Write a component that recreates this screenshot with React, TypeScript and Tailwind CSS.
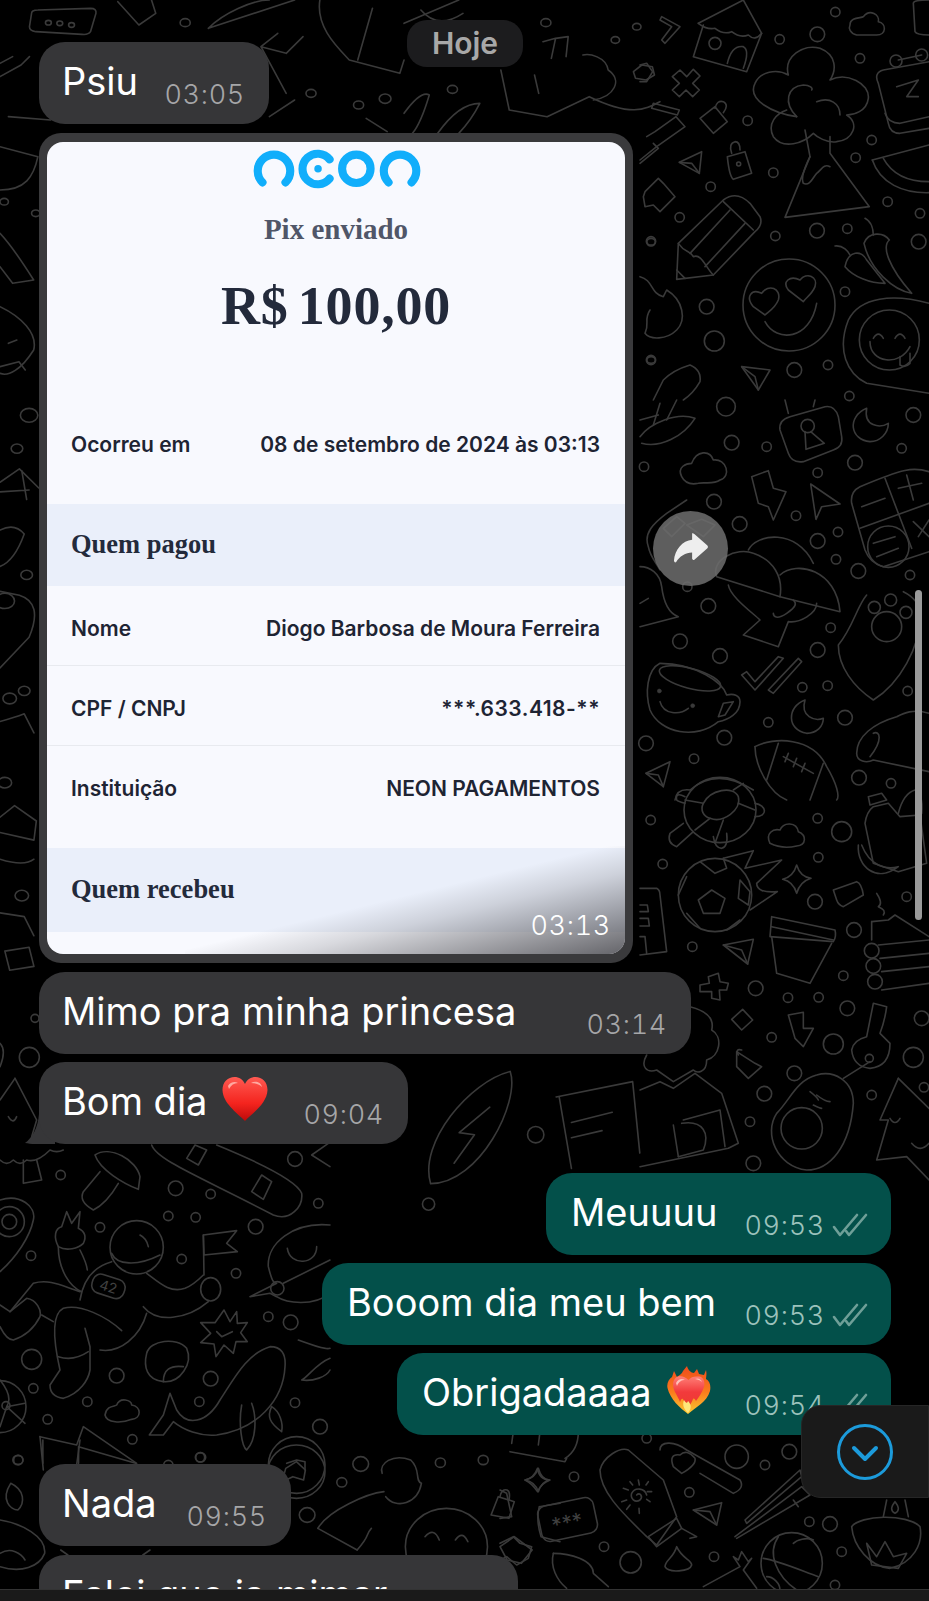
import type { ReactNode } from 'react';

type Dot = [number, number, number];

// doodles are written in the coordinates of a crop, then mapped back onto the page
function Region({ x, y, sx = 3, sy = 3, paths, dots = [], children }: { x: number; y: number; sx?: number; sy?: number; paths: string[]; dots?: Dot[]; children?: ReactNode }) {
  return (
    <g transform={`translate(${x} ${y}) scale(${1 / sx} ${1 / sy})`}>
      {paths.map((d, i) => <path key={i} d={d} vectorEffect="non-scaling-stroke" />)}
      {dots.map(([cx, cy, r], i) => <circle key={i} cx={cx} cy={cy} r={r} vectorEffect="non-scaling-stroke" />)}
      {children}
    </g>
  );
}

function Doodles() {
  return (
    <svg className="absolute inset-0" width="929" height="1601" viewBox="0 0 929 1601" fill="none" stroke="#3a3a3a" strokeWidth="1.6" strokeLinecap="round" strokeLinejoin="round">
      <Region x={640} y={0} paths={[
        'M175 70 L310 0 L365 100 L320 215 L160 170 L190 75', 'M175 70 Q200 90 225 85 Q250 105 275 95 Q300 115 325 105 Q345 125 365 100', 'M262 190 Q275 135 310 140 Q330 150 310 205',
        'M470 350 C400 340 320 300 345 250 C360 215 410 205 445 225 C430 170 490 130 540 145 C590 165 590 210 570 240 C620 215 690 250 685 295 C680 335 640 345 620 345 C660 370 640 420 590 425 C560 430 530 410 520 400 C490 430 430 450 400 410 C380 370 410 340 440 330',
        'M470 350 C430 310 440 260 490 255 C510 255 520 265 515 270', 'M600 345 C600 310 570 290 530 305',
        'M495 390 L510 470 L435 652 L688 620 L570 460 L570 410', 'M510 470 C500 490 480 530 490 550 C510 560 520 530 530 520 C545 510 550 490 570 500',
        'M120 210 L140 230 L160 208 L180 228 L158 250 L178 270 L158 290 L138 270 L118 290 L97 270 L118 250 L97 230 Z',
        'M65 50 L120 80 L75 130 L65 120 L95 80 L60 60 Z', 'M0 195 L20 190 L38 215 L20 245 L0 245',
        'M630 75 C630 50 665 55 670 50 C690 25 720 45 715 65 C740 70 740 105 710 105 L650 105 C630 100 625 85 630 75Z',
        'M180 355 L225 320 L262 365 L220 400 Z', 'M225 325 Q230 300 250 305 Q268 315 250 338',
        'M262 470 L315 455 L335 520 L280 538 Q268 530 262 470 Z', 'M275 460 Q265 430 285 425 Q300 425 300 450',
        'M118 487 L185 455 L178 520 Z', 'M118 487 L155 490 L178 520',
        'M15 575 L55 535 L70 550 L105 590 L60 635 L40 615 L15 620 L10 590 Z',
        'M40 310 L118 330 L112 345 L35 325 Z', 'M0 480 L50 440 L135 380 L108 350 L45 395 L20 410', 'M40 430 L55 445 L0 490',
        'M115 730 L250 600 Q290 570 330 610 L360 650 Q370 675 345 695 L220 825 L110 838 Z', 'M250 605 L340 690', 'M115 730 C135 760 150 750 160 770 C185 760 195 800 220 825', 'M150 760 L270 630', 'M195 800 L315 670', 'M110 810 L135 835',
        'M340 920 C315 890 335 865 365 880 C385 850 425 865 415 900 C405 925 385 935 375 945 Z', 'M445 870 C425 845 450 825 480 840 C500 815 535 830 525 860 C515 885 495 895 490 905 Z', 'M375 965 C410 1030 510 1020 530 910',
        'M675 655 C695 665 700 690 700 705', 'M672 730 C685 695 730 695 748 720 C725 740 745 800 815 880 C760 870 690 810 672 730 Z', 'M585 738 C610 735 625 755 630 765', 'M615 800 C625 750 665 750 680 780 L735 850 C690 850 640 830 615 800 Z',
        'M0 830 C40 840 30 880 70 890 L80 870 C130 900 140 960 110 990 C80 1020 30 1020 15 1000 C30 970 10 960 30 930',
        'M867 910 C760 880 660 890 625 960 C590 1050 620 1120 680 1150 L867 1180', 'M700 1015 Q715 990 730 1015', 'M765 1015 Q780 990 795 1015', 'M690 1025 C690 1090 780 1100 810 1040', 'M780 1070 L780 1095 Q795 1105 810 1090 L810 1060',
        'M697 480 C720 550 790 580 867 578', 'M697 480 L867 435', 'M730 475 C760 530 810 545 867 545',
        'M867 185 L730 210 C710 215 705 230 715 250 L745 370 Q750 400 780 400 L867 385', 'M775 180 L845 165', 'M735 340 Q745 370 780 370 L867 350', 'M770 260 L835 240 L800 290 L835 290', 'M820 10 Q820 0 867 0 M820 10 L825 95 Q830 105 867 105',
        'M305 1100 L390 1110 L355 1170 Z', 'M305 1100 L345 1130 L355 1170',
        'M40 1200 L70 1140 Q100 1110 150 1095 Q185 1110 180 1145 Q160 1180 130 1200',
      ]} dots={[[586, 36, 14], [532, 103, 22], [419, 118, 14], [660, 175, 14], [323, 362, 14], [695, 420, 14], [647, 473, 14], [400, 518, 14], [212, 560, 14], [743, 605, 14], [840, 640, 14], [119, 652, 14], [531, 692, 22], [622, 686, 14], [406, 708, 14], [33, 724, 14], [836, 725, 22], [615, 875, 14], [200, 920, 22], [223, 1023, 30], [33, 1080, 14], [463, 1110, 22], [564, 1095, 14], [628, 1188, 14], [225, 130, 18], [447, 915, 138], [748, 1020, 90], [296, 492, 6], [768, 183, 18], [845, 165, 18]]} />

      <Region x={640} y={400} paths={[
        'M0 110 C30 70 110 35 165 55 C130 110 60 145 5 130', 'M60 10 L40 75 M110 0 L80 60 M0 60 L55 45',
        'M450 50 L555 20 Q585 15 595 50 L605 110 Q610 140 580 150 L490 185 Q455 190 445 160 L420 90 Q415 60 450 50Z', 'M495 95 L498 148 L553 130 L512 95', 'M435 0 L445 40', 'M525 0 L520 20',
        'M680 25 C620 50 630 120 690 125 C720 125 745 100 745 70 C720 85 670 80 680 25Z',
        'M125 230 C110 200 140 190 155 190 C170 150 210 150 220 180 C260 175 275 230 240 240 C220 255 190 245 175 250 C150 255 135 250 125 230Z',
        'M335 230 L385 212 L400 265 L438 275 L400 360 L385 320 L355 310Z', 'M512 252 L600 312 L545 320 L528 358Z',
        'M867 215 C820 200 790 205 660 260 Q630 275 635 310 L675 450 Q690 490 730 500 L867 455', 'M735 235 L815 445', 'M660 385 L867 310', 'M665 320 L735 295', 'M775 265 L845 250', 'M800 225 L820 300', 'M700 430 L765 410', 'M710 470 L775 445', 'M820 365 L867 410', 'M867 360 L835 410',
        'M230 530 C210 480 290 440 340 460 C400 480 430 530 420 590 Z', 'M325 450 C350 400 470 385 520 490', 'M420 525 C470 480 590 510 600 635 L420 590', 'M265 555 C270 590 340 640 360 660 L310 705 L415 740 L445 665 C480 670 530 640 530 610', 'M400 640 C400 650 410 660 440 640 C470 620 470 610 460 600',
        'M140 300 L80 340 C40 370 10 400 25 440 C30 470 50 490 60 510', 'M70 385 L110 350 L135 370 L95 410 Z', 'M140 375 L185 358 L225 375 L190 410 Z',
        'M0 500 C30 500 60 520 65 560 C70 600 85 640 115 650 L0 680', 'M0 610 L25 595',
        'M680 585 C650 620 640 680 595 735 C595 800 640 860 700 900 C780 850 840 740 840 650 C840 610 820 590 790 575',
        'M305 825 L345 870 L430 775 L415 770 L345 845 L320 815 Z', 'M385 870 L475 775 L485 785 L400 880 Z',
        'M60 790 C20 810 15 880 30 930 C60 1000 170 1020 235 965 C265 960 300 940 300 905 C300 885 280 880 260 885 C250 850 170 790 60 790Z', 'M60 905 C70 945 120 945 145 925', 'M235 950 L250 910 L280 905 L255 945Z',
        'M495 900 C440 920 440 990 500 1000 C530 1000 550 980 550 955 C525 965 480 950 495 900Z',
        'M345 1040 C400 1010 520 1010 560 1100 C590 1150 600 1190 590 1200', 'M345 1040 C345 1100 390 1180 440 1200', 'M415 1030 L380 1140', 'M550 1090 L510 1200', 'M430 1070 L520 1120', 'M445 1060 L435 1085 M470 1075 L460 1100 M495 1090 L485 1115',
        'M867 940 C820 925 790 940 770 950 C700 970 650 1010 650 1060 C650 1085 680 1090 700 1080 L867 1115', 'M700 1000 C720 990 730 1020 690 1070',
        'M18 1120 L90 1085 L70 1160 Z', 'M18 1120 L55 1125 L70 1160', 'M105 1200 Q110 1165 150 1170 Q230 1100 340 1170',
      ]} dots={[[275, 128, 22], [380, 140, 14], [820, 45, 22], [785, 145, 14], [645, 188, 22], [533, 218, 14], [12, 200, 14], [222, 305, 22], [468, 347, 14], [299, 372, 22], [533, 423, 22], [594, 396, 14], [588, 478, 14], [655, 513, 22], [810, 525, 14], [142, 560, 14], [205, 618, 22], [572, 683, 14], [120, 724, 22], [240, 768, 22], [533, 750, 22], [487, 862, 14], [563, 857, 14], [803, 873, 14], [385, 967, 14], [615, 953, 22], [253, 1013, 22], [18, 1030, 22], [162, 1076, 14], [657, 1133, 22], [753, 1150, 14], [258, 20, 28], [745, 440, 62], [503, 78, 20], [740, 680, 45], [703, 622, 18], [752, 600, 18], [798, 637, 18]]}>
        <ellipse cx="150" cy="835" rx="95" ry="30" transform="rotate(15 150 835)" vectorEffect="non-scaling-stroke" />
        <circle cx="58" cy="873" r="6" fill="#3a3a3a" />
        <circle cx="158" cy="917" r="6" fill="#3a3a3a" />
      </Region>

      <Region x={640} y={780} paths={[
        'M190 70 C210 30 280 15 295 50 C305 90 250 130 210 115 C190 110 180 90 190 70Z', 'M130 130 L90 160 Q80 190 110 200 L160 155', 'M345 70 C380 75 385 110 345 110', 'M220 170 Q225 205 245 205 Q265 200 260 160', 'M135 50 Q105 35 110 60 Q115 65 135 70', 'M190 70 L135 60 M210 115 L165 150 M250 120 L225 190 M295 70 L345 90 M280 30 L310 10',
        'M215 330 L255 355 L240 400 L190 400 L175 360Z', 'M180 245 L225 280 L260 265 L250 235', 'M300 300 L330 335 L325 375 L295 355Z', 'M115 345 L140 290', 'M140 400 L180 445', 'M260 450 L300 420', 'M250 235 L340 212 L315 265 L425 240 L350 310 Q350 340 412 335 L330 390',
        'M470 255 Q480 290 513 295 Q480 305 470 340 Q460 305 428 298 Q460 290 470 255Z',
        'M390 190 C375 160 400 145 420 150 C430 125 470 125 475 155 C500 165 500 195 470 198 C440 205 410 200 390 190Z',
        'M690 75 L740 60 L725 40 L685 50Z', 'M675 130 Q680 95 700 80 L745 70 L780 110 L840 105 L860 250 L775 275 L700 250Z', 'M655 195 C650 260 710 310 775 260 C740 270 690 260 665 195', 'M775 100 Q790 40 825 30 Q850 40 845 100',
        'M580 330 L650 305 Q665 310 670 345 L610 380 Q595 375 590 360 Z',
        'M395 410 L585 450 Q590 470 580 485 L390 470Z', 'M395 470 L410 580 L510 610 L575 490', 'M395 440 L580 480',
        'M250 495 L340 478 L323 552Z', 'M250 495 L305 510 L323 552',
        'M0 325 L50 325 Q60 330 60 345 L80 515 L0 525', 'M0 375 L22 375 L25 395 L0 395', 'M0 415 L25 415 L28 438 L0 438', 'M0 470 L15 470 L20 520',
        'M695 425 L745 420 L765 405 L867 470', 'M695 425 L695 480', 'M715 495 L867 480', 'M720 535 L867 520', 'M725 575 L867 560', 'M725 630 L867 610', 'M710 340 Q730 370 715 380 Q740 390 730 405',
        'M205 590 L235 580 L240 605 L265 610 L260 630 L238 630 L240 660 L215 655 L215 635 L180 635 L180 615 L208 610Z', 'M308 688 L338 720 L305 750 L275 718Z', 'M445 705 L490 697 L490 745 L520 745 L490 800 L465 775 L445 705',
        'M700 670 L740 680 Q735 720 720 760 L750 790 Q750 860 690 865 Q640 860 635 810 Q640 780 680 770 Z',
        'M640 970 C640 900 580 870 530 885 C470 900 450 960 410 1000 C370 1060 410 1160 500 1170 C570 1170 630 1100 640 970Z', 'M610 895 L690 845', 'M510 935 Q530 950 535 960 M530 945 Q555 965 570 965 M520 975 Q540 985 545 985',
        'M290 815 L345 850 L365 860 L325 895 L290 860 Z', 'M295 825 Q285 805 305 810',
        'M775 895 L867 985', 'M775 895 L720 1020 L745 1020 L710 1140 L800 1130 L867 1200', 'M750 1015 Q765 1040 780 1015', 'M815 1090 Q840 1120 867 1090',
        'M150 680 C190 690 225 710 215 750 C250 770 240 830 200 840 C200 880 170 880 160 870 L100 905 L50 870 C20 880 0 860 20 825', 'M0 930 L60 905 L100 925 L165 880 L245 940 L295 1090 L265 1105 L0 1160', 'M100 1035 L115 1130', 'M130 1020 L240 990 L255 1100', 'M125 1030 C190 1020 210 1060 190 1110 L115 1130',
      ]} dots={[[32, 120, 14], [533, 115, 14], [605, 155, 30], [535, 232, 14], [68, 252, 14], [525, 365, 22], [800, 350, 14], [157, 500, 14], [642, 450, 22], [610, 587, 14], [347, 625, 22], [444, 653, 14], [536, 652, 14], [622, 685, 22], [845, 715, 22], [395, 772, 14], [580, 792, 30], [463, 880, 22], [373, 941, 22], [820, 832, 30], [695, 945, 14], [852, 922, 14], [330, 1025, 14], [340, 1150, 22], [225, 345, 110], [695, 512, 22], [700, 558, 22], [705, 605, 22], [688, 835, 12], [485, 1045, 62]]}>
        <ellipse cx="240" cy="90" rx="108" ry="98" vectorEffect="non-scaling-stroke" />
      </Region>

      <Region x={0} y={1140} paths={[
        'M335 340 C350 375 410 380 480 345', 'M420 285 Q440 295 445 320', 'M240 480 C250 420 280 380 335 365', 'M440 400 C480 430 510 460 555 445 C580 435 595 420 610 405', 'M430 500 C470 550 560 540 625 485', 'M440 520 C420 590 360 640 300 630',
        'M365 572 C320 530 240 490 190 505 C160 520 155 580 180 690 L150 735 Q150 770 190 775 C240 760 265 720 270 690 L270 620 L255 565', 'M175 650 Q220 665 265 635',
        'M240 455 C190 440 150 415 100 430 L30 515 L0 495', 'M30 515 L80 475 C110 480 125 510 120 530 C100 570 70 590 40 600 Q20 600 0 560', 'M125 525 L160 545', 'M175 320 C175 390 210 440 245 455', 'M240 330 C250 350 260 370 262 390',
        'M175 320 C160 290 165 265 185 260 L200 215 L215 250 L240 215 L235 265 Q265 280 250 310 C235 325 200 335 175 320Z',
        'M610 285 L710 272 L680 310 L712 335 L612 345 Z', 'M610 285 L612 405',
        'M990 255 C880 245 800 310 805 380 C815 420 820 430 830 430 L750 470 L810 460 L830 470 C860 490 940 500 990 460', 'M850 430 L990 360', 'M862 325 C870 380 950 375 950 320',
        'M672 510 L690 545 L710 515 L712 550 L742 548 L722 578 L742 605 L708 605 L700 640 L672 615 L648 650 L642 612 L602 608 L632 580 L602 548 L645 548 Z', 'M650 575 L665 590 L697 575',
        'M440 640 C450 600 530 590 560 625 C580 670 540 730 490 725 C440 720 430 680 440 640Z', 'M490 725 C490 690 510 675 550 680',
        'M510 760 L530 810 C560 860 620 850 660 780 C700 720 740 640 810 620 Q860 620 855 680 C850 780 770 870 650 885 C600 890 550 870 520 845 L490 885 L448 885 L490 825 Z', 'M725 795 C715 850 725 920 740 930 C770 900 770 830 755 790', 'M815 800 C800 830 810 850 845 875 C850 850 840 815 815 800',
        'M285 45 C330 15 410 60 420 110 L415 148 C370 130 300 90 285 45Z', 'M300 95 L250 155 Q235 185 280 210 Q320 190 355 130',
        'M70 60 L70 130 L125 120 L110 60', 'M0 60 Q20 80 40 60 Q60 80 80 60 Q110 70 150 30 Q170 40 190 30',
        'M455 15 C470 60 600 110 820 225 C870 245 910 200 905 160 C890 120 760 60 650 15', 'M585 15 L620 30 L595 75 L560 55 Z', 'M785 105 L815 125 L790 178 L755 155 Z',
        'M0 180 C60 160 110 200 100 240 C90 290 50 350 0 395',
        'M315 825 C320 795 345 800 350 795 C360 770 395 780 395 795 C425 800 425 835 395 838 C365 850 320 850 315 825Z',
        'M0 720 Q40 770 20 800 L0 860 M20 800 L75 790 M20 800 L75 850',
        'M120 890 L230 915 L250 860 L410 970', 'M120 890 L130 990', 'M240 900 L228 990',
        'M895 600 C950 620 980 630 990 625 M990 655 C950 670 920 715 905 720 C940 725 980 710 990 690', 'M985 10 L935 45 L990 80',
        'M860 970 L890 960 L915 965 L915 990',
      ]} dots={[[182, 105, 14], [527, 145, 22], [632, 162, 14], [885, 57, 22], [955, 190, 14], [505, 228, 14], [587, 232, 14], [300, 262, 14], [767, 260, 22], [93, 347, 14], [545, 357, 14], [708, 400, 14], [805, 530, 14], [872, 547, 22], [95, 658, 30], [350, 707, 22], [632, 716, 22], [100, 745, 14], [262, 785, 14], [598, 785, 14], [885, 788, 14], [143, 838, 14], [960, 860, 22], [397, 898, 14], [55, 960, 14], [600, 952, 14], [505, 975, 14], [410, 322, 80], [28, 245, 45], [28, 245, 22], [832, 445, 20], [890, 975, 85], [0, 800, 78], [18, 797, 12]]}>
        <ellipse cx="632" cy="448" rx="30" ry="35" vectorEffect="non-scaling-stroke" />
        <rect x="275" y="410" width="100" height="58" rx="24" transform="rotate(18 325 440)" vectorEffect="non-scaling-stroke" />
        <text x="325" y="455" textAnchor="middle" fontSize="42" fontFamily="Inter, sans-serif" transform="rotate(18 325 440)" stroke="none" fill="#404040">42</text>
      </Region>

      <Region x={500} y={1430} paths={[
        'M30 65 L195 95 L200 85', 'M40 5 L35 40 M120 5 L115 45 M235 5 Q235 60 195 85',
        'M115 115 Q125 150 148 150 Q125 155 115 185 Q105 155 75 150 Q105 145 115 115Z',
        'M300 120 C310 80 360 50 385 60 L490 150 L530 260 L470 345 L440 320 C380 260 300 190 300 120Z', 'M445 320 L530 265 L545 295 L470 350Z', 'M545 295 L590 320 L570 325', 'M385 180 L370 175 M445 155 L438 165 M415 150 L418 165 M390 155 L398 165 M455 185 L442 185 M450 215 L440 208 M417 235 L418 250 M390 225 L380 238 M380 210 L365 215', 'M410 195 C420 185 430 200 420 210 C405 220 390 205 395 190 C405 170 435 175 440 195',
        'M480 60 C480 35 520 30 560 60 L720 150 Q735 175 700 190 L600 130', 'M520 110 Q505 70 540 75 Q560 55 585 85 Q590 105 545 130 Z',
        'M580 240 L665 218 L650 285Z', 'M580 240 L630 245 L650 285',
        'M735 270 L900 120 L905 140 L740 280Z', 'M710 325 L930 195 L905 170 L705 320', 'M880 210 L895 230',
        'M790 385 C830 390 900 420 955 440', 'M835 320 C800 370 830 440 890 480', 'M880 340 C890 330 920 320 940 330', 'M800 440 C820 440 840 460 840 480',
        'M1055 290 C1080 255 1220 250 1260 290 C1270 340 1240 400 1170 415 C1110 410 1060 350 1055 290Z', 'M1100 340 L1130 380 L1155 335 L1180 380 L1220 370 L1195 415 L1115 405 Z', 'M1185 215 Q1165 240 1185 250 Q1205 240 1185 215Z', 'M1160 210 L1150 260 M1215 210 L1225 260',
        'M610 470 L720 410 L700 380 L715 390 L725 365 L745 395 L755 385 L730 420 L770 475',
        'M160 370 C210 370 280 390 280 430 L325 470', 'M160 370 C150 410 170 450 200 475',
        'M530 350 C545 385 575 390 575 405 C570 425 505 430 495 410 C495 390 520 385 530 350Z',
        'M0 340 L40 320 L60 340 L95 350 L85 385 L50 405 L20 380 L0 390', 'M0 180 L20 190 L35 260 L0 265',
      ]} dots={[[222, 140, 14], [312, 350, 14], [392, 397, 32], [568, 187, 14], [642, 380, 14], [795, 105, 14], [868, 65, 22], [440, 25, 14], [928, 275, 14], [990, 282, 22], [1025, 365, 14], [1005, 465, 14], [875, 400, 92], [710, 80, 35]]}>
        <rect x="118" y="215" width="170" height="108" rx="25" transform="rotate(-12 200 270)" vectorEffect="non-scaling-stroke" />
        <text x="200" y="300" textAnchor="middle" fontSize="62" fontFamily="Inter, sans-serif" transform="rotate(-12 200 270)" stroke="none" fill="#404040">***</text>
      </Region>

      <Region x={0} y={1440} sx={2.8} paths={[
        'M1070 100 C1060 70 1100 40 1150 60 C1180 90 1160 120 1180 130 C1170 190 1110 210 1080 170', 'M890 265 L1000 330', 'M890 265 C920 210 1030 160 1075 155', 'M1000 330 C1040 280 1020 290 1040 265', 'M830 65 L855 90 L850 120 L820 110 L790 125 L800 85 Z',
        'M1190 290 Q1215 260 1230 300', 'M1275 300 Q1295 270 1310 305',
        'M30 130 C0 180 30 210 50 210 C70 190 70 150 30 130', 'M0 240 C60 250 130 290 125 340 C110 380 60 400 0 380', 'M0 340 C30 320 60 340 70 360',
        'M1395 170 L1440 185 L1425 235 L1375 225 Z', 'M1400 170 Q1405 145 1420 150 Q1430 155 1425 180', 'M1505 85 Q1510 120 1540 120 Q1515 130 1505 155 Q1490 130 1470 120 Q1495 115 1505 85Z',
        'M1510 200 L1568 190 M1510 200 Q1500 240 1515 290 L1568 305', 'M1400 320 L1440 290 L1490 330 L1460 370 L1420 360 Z',
        'M120 70 L120 0 M220 70 L220 20 L380 70', 'M170 330 L190 345 M420 330 L400 345',
      ]} dots={[[830, 95, 80], [1010, 72, 22], [957, 127, 14], [860, 225, 22], [1233, 68, 14], [1353, 60, 14], [562, 52, 14], [50, 60, 14], [1250, 320, 115]]} />

      <Region x={0} y={0} sx={2.376} paths={[
        'M75 40 Q75 30 90 30 L215 25 Q230 25 228 40 L215 95 Q210 105 195 103 L85 95 Q70 92 70 80 Z',
        'M280 5 L330 75 L370 40 L360 0', 'M495 85 C530 40 600 0 640 0 M495 85 L700 0', 'M760 0 C750 80 800 140 830 180 L950 220 L960 180 M885 25 L850 180', 'M960 70 L1090 0 M1000 30 Q1040 90 1100 40',
        'M1320 115 L1350 110 L1345 170 M1290 125 L1320 115 L1310 175', 'M1270 225 L1280 280', 'M1190 210 L1210 330 L1300 350 L1400 290 C1500 350 1530 330 1568 305',
        'M1385 165 C1400 160 1440 170 1445 210 C1480 240 1460 290 1410 300', 'M1505 215 L1525 195 L1550 200 L1555 225 L1535 240 L1510 235 Z',
        'M960 340 Q1000 270 1020 285 Q1000 370 980 400', 'M1040 400 Q1090 310 1140 310 Q1120 360 1090 400', 'M870 355 L920 395',
        'M660 100 L620 140 L680 160 L720 110 M620 140 L680 280 M640 350 L700 300',
        'M0 190 L30 170 M0 230 L50 195 L70 170 M20 350 L120 360',
        'M0 440 L90 470 C80 530 60 570 0 570', 'M0 700 C30 740 60 800 80 840 L30 850 L0 800', 'M0 920 C50 950 90 1000 80 1050 C50 1110 20 1130 0 1120', 'M20 1030 L40 1020 M0 1100 L45 1085 L60 1110',
      ]} dots={[[440, 68, 12], [115, 68, 7], [142, 70, 7], [170, 75, 7], [739, 280, 12], [1297, 68, 12], [1462, 120, 10], [1513, 80, 10], [1075, 268, 12], [852, 315, 12], [915, 296, 14], [10, 605, 10], [85, 640, 10], [1547, 725, 10], [1547, 1080, 10]]} />

      <Region x={0} y={400} sx={2.063} sy={2.613} paths={[
        'M0 215 L40 180 L80 230', 'M45 185 L55 260 M0 240 L60 235', 'M0 340 Q30 320 50 350 Q30 420 0 435', 'M0 500 L40 510 Q90 530 60 620 L0 700', 'M0 840 Q30 830 50 820 L70 870', 'M0 1090 L30 1060 L75 1100 L70 1150 L0 1130', 'M0 1200 Q50 1220 70 1200', 'M0 1340 L50 1350 L70 1400', 'M10 1440 L60 1430 L70 1480 L20 1490 Z',
      ]} dots={[[35, 127, 12], [60, 40, 18], [55, 457, 12], [10, 525, 20], [50, 760, 12], [10, 1000, 14], [45, 1295, 14], [20, 780, 14]]} />

      <Region x={0} y={960} paths={[
        'M0 250 Q20 270 0 320', 'M45 355 L0 420', 'M45 355 L110 480 L95 530', 'M25 470 Q40 495 50 470',
      ]} dots={[[88, 292, 30], [105, 175, 12]]} />

      <Region x={0} y={0} sx={0.98} sy={0.98} paths={[
        'M422 1160 C410 1120 460 1060 500 1050 C510 1080 470 1160 422 1160Z', 'M480 1085 L450 1110 L465 1112 L445 1140',
        'M545 1075 L620 1060 L627 1130', 'M560 1100 L600 1090 M560 1115 L590 1108', 'M548 1075 L560 1145',
      ]} dots={[[525, 1112, 8], [420, 1180, 6]]} />
    </svg>
  );
}

function Ticks() {
  return (
    <svg width="36" height="24" viewBox="0 0 36 24" fill="none" stroke="#6f9f98" strokeWidth="2.6" strokeLinecap="round" strokeLinejoin="round">
      <path d="M2 14 L8 22 L25 2" />
      <path d="M14 18 L17 22 L34 2" />
    </svg>
  );
}

function Heart() {
  return (
    <svg width="46" height="44" viewBox="0 0 46 44" className="ml-[15px] -mt-1">
      <defs>
        <linearGradient id="heart" x1="0" y1="0" x2="0" y2="1">
          <stop offset="0" stopColor="#ff5a52" />
          <stop offset="0.6" stopColor="#f4241e" />
          <stop offset="1" stopColor="#bd0a0a" />
        </linearGradient>
      </defs>
      <path d="M23 44 C14 35 1 26 0.5 13 C0.5 5 6 0 12.5 0 C17 0 21 2.5 23 7 C25 2.5 29 0 33.5 0 C40 0 45.5 5 45.5 13 C45 26 32 35 23 44 Z" fill="url(#heart)" />
      <path d="M6 9 C8 5 13 4 16 6 C12 6 9 8 7 12 Z M29 6 C33 3.5 39 5 40 10 C37 7 33 6 29 6 Z" fill="#ffa8a0" />
    </svg>
  );
}

function FireHeart() {
  return (
    <svg width="44" height="48" viewBox="0 0 44 48" className="ml-[15px] -mt-1">
      <defs>
        <linearGradient id="flame" x1="0" y1="0" x2="0" y2="1">
          <stop offset="0" stopColor="#ee4a1c" />
          <stop offset="0.55" stopColor="#fa7d1c" />
          <stop offset="1" stopColor="#fcc832" />
        </linearGradient>
        <linearGradient id="fheart" x1="0" y1="0" x2="0" y2="1">
          <stop offset="0" stopColor="#ff8078" />
          <stop offset="0.5" stopColor="#f23a3c" />
          <stop offset="1" stopColor="#ee3b2e" />
        </linearGradient>
      </defs>
      <path d="M21 48 C13 42 3 33 0.5 22 C-0.5 17 2 13 5 11 L7 5 L10 11 C12 9 15 8 16 5 L20 0 C21 4 24 7 27 7 L30 3 L32 8 L37 9 L39 4 C40 8 39 11 39 13 C43 15 44 20 43 25 C40 36 29 41 21 48 Z" fill="url(#flame)" />
      <path d="M21.5 14 C18 10 12 9 9 11.5 C5 15 5.5 21 8 26 C10 30 12 33 13 36 C14 33 15 32 16 33 C17 36 19 39 21 42 C23 39 25 36 26 33 C27 32 28 33 29 35 C31 32 35 27 37 21 C38.5 15 36 11 32 10.5 C27 10 24 11 21.5 14 Z" fill="url(#fheart)" />
      <path d="M9 17 C11 13 15 12 18 14 C15 14 12 15 10 20 Z M28 13 C31 11.5 34 13 35 16 C33 14 31 13.5 28 13 Z" fill="#ffc2ba" />
      <path d="M21 47 C17 43 15 39 17 34 C19 37 20 38 21 35 C23 37 26 41 21 47 Z" fill="#ffe77a" />
    </svg>
  );
}

function Bubble({ text, time, width, out, emoji }: { text: string; time: string; width: string; out?: boolean; emoji?: ReactNode }) {
  return (
    <div className={`flex h-[82px] justify-between rounded-[26px] text-white ${width} ${out ? 'self-end bg-[#03504a] pl-[25px] pr-[23px]' : 'self-start bg-[#363638] pl-[23px] pr-[24px]'}`}>
      <div className="flex h-[46px] mt-4 items-center">
        <span className="text-[38px] leading-[46px] font-[Inter] whitespace-nowrap">{text}</span>
        {emoji}
      </div>
      <div className="flex items-start gap-[7px] mt-9">
        <span className={`text-[27px] leading-[33px] font-[Inter] font-light tabular-nums tracking-[0.7px] ${out ? 'text-[#9cc2bc]' : 'text-[#a6a6a8]'}`}>{time}</span>
        {out && <div className="mt-[4px]"><Ticks /></div>}
      </div>
    </div>
  );
}

function Row({ label, value, border, h = 'h-[80px] pt-[6px]' }: { label: string; value: ReactNode; border?: boolean; h?: string }) {
  return (
    <div className={`flex items-center justify-between pl-6 pr-[25px] text-[#1e2433] text-[21px] font-semibold font-[Inter] ${h} ${border ? 'border-b border-[#e8eaef]' : ''}`}>
      <span>{label}</span>
      <span>{value}</span>
    </div>
  );
}

function Receipt() {
  return (
    <div className="flex items-center gap-5">
      <div className="rounded-[22px] bg-[#3a3a3c] py-[9px] px-2 w-[594px] h-[830px]">
        <div className="relative h-[812px] overflow-hidden rounded-[16px] bg-[#f8f9fe]">
          <div className="h-[362px] flex flex-col items-center pt-2">
            <svg width="194" height="61" viewBox="0 0 570 180" className="-mt-[10px] mb-[2px]" fill="none" stroke="#11aefb" strokeWidth="24" strokeLinecap="round">
              <path d="M68 125 A48 48 0 1 1 136 125" />
              <path d="M266 57 A45 45 0 1 0 266 114" />
              <circle cx="232" cy="85" r="11" fill="#11aefb" stroke="none" />
              <circle cx="345" cy="85" r="42" />
              <path d="M440 125 A48 48 0 1 1 508 125" />
            </svg>
            <div className="mt-[9px] text-[29px] leading-[34px] font-bold text-[#505668] font-['Liberation_Serif']">Pix enviado</div>
            <div className="mt-[29px] text-[54px] leading-[62px] font-bold text-[#232a3b] font-['Liberation_Serif'] tracking-[0.8px] [word-spacing:-5px]">R$ 100,00</div>
            <div className="w-full mt-[88px]">
              <Row label="Ocorreu em" value="08 de setembro de 2024 às 03:13" h="h-[40px]" />
            </div>
          </div>
          <div className="flex h-[82px] items-center bg-[#eaeffa] pl-6 text-[26.5px] font-bold text-[#232a3b] font-['Liberation_Serif']">Quem pagou</div>
          <Row label="Nome" value="Diogo Barbosa de Moura Ferreira" border />
          <Row label="CPF / CNPJ" value={<span className="tracking-[0.5px]">***.633.418-**</span>} border />
          <Row label="Instituição" value="NEON PAGAMENTOS" h="h-[102px] pb-[16px]" />
          <div className="flex h-[84px] items-center bg-[#eaeffa] pl-6 text-[26.5px] font-bold text-[#232a3b] font-['Liberation_Serif']">Quem recebeu</div>
          <div className="absolute bottom-0 right-0 h-[108px] w-[440px] bg-[linear-gradient(to_bottom_right,transparent_48%,rgba(120,120,125,0.25)_62%,rgba(75,75,80,0.85)_100%)]" />
          <span className="absolute bottom-[12px] right-[14px] text-[27px] leading-[33px] font-[Inter] font-light tabular-nums tracking-[0.7px] text-white">03:13</span>
        </div>
      </div>
      <div className="flex h-[75px] w-[75px] items-center justify-center rounded-full bg-[#6e6e6e]/85">
        <svg width="36" height="32" viewBox="95 395 113 98">
          <path d="M155 398 Q157 396 162 400 L203 436 Q207 441 203 445 L163 480 Q157 484 155 478 L155 458 C135 458 115 470 105 488 Q100 492 98 484 C100 450 125 420 155 418 Z" fill="#eeeeee" />
        </svg>
      </div>
    </div>
  );
}

export default function App() {
  return (
    <div className="relative h-[1601px] w-[929px] overflow-hidden bg-black">
      <Doodles />
      <div className="relative flex flex-col pl-[39px] pr-[38px] pt-[42px]">
        <Bubble text="Psiu" time="03:05" width="w-[230px]" />
        <div className="mt-[9px]"><Receipt /></div>
        <div className="mt-[9px]"><Bubble text="Mimo pra minha princesa" time="03:14" width="w-[652px]" /></div>
        <div className="relative mt-2 self-start">
          <svg className="absolute -left-[14px] bottom-0" width="30" height="30" viewBox="0 0 30 30" fill="#363638"><path d="M14 0 L30 0 L30 30 L10 30 C6 30 3 29.5 0 29 C7 24 13 14 14 0 Z" /></svg>
          <div className="relative"><Bubble text="Bom dia" time="09:04" width="w-[369px]" emoji={<Heart />} /></div>
        </div>
        <div className="mt-[29px] flex flex-col gap-2">
          <Bubble out text="Meuuuu" time="09:53" width="w-[345px]" />
          <Bubble out text="Booom dia meu bem" time="09:53" width="w-[569px]" />
          <Bubble out text="Obrigadaaaa" time="09:54" width="w-[494px]" emoji={<FireHeart />} />
        </div>
        <div className="mt-[29px] flex flex-col gap-[9px]">
          <Bubble text="Nada" time="09:55" width="w-[252px]" />
          <Bubble text="Falei que ia mimar" time="09:55" width="w-[479px]" />
        </div>
      </div>

      <div className="absolute left-[407px] top-5 flex h-[47px] w-[116px] items-center justify-center rounded-[20px] bg-[#1c1c1e] text-[30px] font-semibold text-[#a8a8a8] font-[Inter]">Hoje</div>
      <div className="absolute left-[915px] top-[590px] h-[330px] w-[7px] rounded-full bg-[#9a9a9a]" />
      <div className="absolute right-0 top-[1405px] flex h-[93px] w-[128px] items-center justify-center rounded-l-[20px] border border-[#262626] bg-[#1a1a1a]">
        <svg width="58" height="58" viewBox="0 0 58 58" fill="none" stroke="#1c9bdb" strokeLinecap="round" strokeLinejoin="round">
          <circle cx="29" cy="29" r="26.5" strokeWidth="3" />
          <path d="M18 25 L29 36 L40 25" strokeWidth="4" />
        </svg>
      </div>
      <div className="absolute bottom-0 left-0 h-3 w-full border-t border-[#333333] bg-[#1a1a1a]" />
    </div>
  );
}
